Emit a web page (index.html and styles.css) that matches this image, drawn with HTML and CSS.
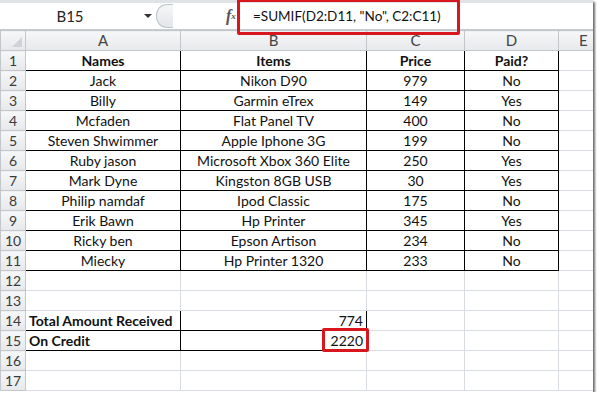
FILE: index.html
```html
<!DOCTYPE html>
<html lang="en">

<head>
    <meta charset="UTF-8">
    <title>SUMIF example</title>
    <link rel="stylesheet" href="styles.css">
</head>

<body>
    <div class="window">
        <div class="formula-bar">
            <div class="name-box">
                <span class="cell-ref">B15</span>
                <span class="arrow"></span>
            </div>
            <div class="grip"><span></span></div>
            <div class="fx">f<sub>x</sub></div>
            <div class="formula">
                <span class="formula-text">=SUMIF(D2:D11, "No", C2:C11)</span>
                <span class="highlight"></span>
            </div>
        </div>
        <table class="sheet">
            <colgroup>
                <col class="c-head">
                <col class="c-a">
                <col class="c-b">
                <col class="c-c">
                <col class="c-d">
                <col class="c-e">
            </colgroup>
            <tr class="col-heads">
                <th class="corner"><span></span></th>
                <th>A</th>
                <th>B</th>
                <th>C</th>
                <th>D</th>
                <th>E</th>
            </tr>
            <tr>
                <th>1</th>
                <td class="b bold">Names</td>
                <td class="b bold">Items</td>
                <td class="b bold">Price</td>
                <td class="b bold">Paid?</td>
                <td></td>
            </tr>
            <tr>
                <th>2</th>
                <td class="b">Jack</td>
                <td class="b">Nikon D90</td>
                <td class="b">979</td>
                <td class="b">No</td>
                <td></td>
            </tr>
            <tr>
                <th>3</th>
                <td class="b">Billy</td>
                <td class="b">Garmin eTrex</td>
                <td class="b">149</td>
                <td class="b">Yes</td>
                <td></td>
            </tr>
            <tr>
                <th>4</th>
                <td class="b">Mcfaden</td>
                <td class="b">Flat Panel TV</td>
                <td class="b">400</td>
                <td class="b">No</td>
                <td></td>
            </tr>
            <tr>
                <th>5</th>
                <td class="b">Steven Shwimmer</td>
                <td class="b">Apple Iphone 3G</td>
                <td class="b">199</td>
                <td class="b">No</td>
                <td></td>
            </tr>
            <tr>
                <th>6</th>
                <td class="b">Ruby jason</td>
                <td class="b">Microsoft Xbox 360 Elite</td>
                <td class="b">250</td>
                <td class="b">Yes</td>
                <td></td>
            </tr>
            <tr>
                <th>7</th>
                <td class="b">Mark Dyne</td>
                <td class="b">Kingston 8GB USB</td>
                <td class="b">30</td>
                <td class="b">Yes</td>
                <td></td>
            </tr>
            <tr>
                <th>8</th>
                <td class="b">Philip namdaf</td>
                <td class="b">Ipod Classic</td>
                <td class="b">175</td>
                <td class="b">No</td>
                <td></td>
            </tr>
            <tr>
                <th>9</th>
                <td class="b">Erik Bawn</td>
                <td class="b">Hp Printer</td>
                <td class="b">345</td>
                <td class="b">Yes</td>
                <td></td>
            </tr>
            <tr>
                <th>10</th>
                <td class="b">Ricky ben</td>
                <td class="b">Epson Artison</td>
                <td class="b">234</td>
                <td class="b">No</td>
                <td></td>
            </tr>
            <tr>
                <th>11</th>
                <td class="b">Miecky</td>
                <td class="b">Hp Printer 1320</td>
                <td class="b">233</td>
                <td class="b">No</td>
                <td></td>
            </tr>
            <tr>
                <th>12</th>
                <td></td><td></td><td></td><td></td><td></td>
            </tr>
            <tr>
                <th>13</th>
                <td></td><td></td><td></td><td></td><td></td>
            </tr>
            <tr>
                <th>14</th>
                <td class="b bold left">Total Amount Received</td>
                <td class="b num">774</td>
                <td></td><td></td><td></td>
            </tr>
            <tr>
                <th>15</th>
                <td class="b bold left">On Credit</td>
                <td class="b num active">2220<span class="mark"></span></td>
                <td></td><td></td><td></td>
            </tr>
            <tr>
                <th>16</th>
                <td></td><td></td><td></td><td></td><td></td>
            </tr>
            <tr>
                <th>17</th>
                <td></td><td></td><td></td><td></td><td></td>
            </tr>
        </table>
    </div>
</body>

</html>
```

FILE: styles.css
```css
body {
    margin: 0;
    background: #fff;
    font-family: Lato, 'Open Sans', sans-serif;
    color: #111;
}

.window {
    width: 593px;
    height: 392px;
    overflow: hidden;
    box-shadow: 2px 2px 2px #6f6f6f;
    background: #fff;
}

/* formula bar */

.formula-bar {
    position: relative;
    display: flex;
    height: 30px;
    box-sizing: border-box;
    border-top: 3px solid #dfe3e8;
    border-bottom: 1px solid #c6ccd4;
    background: #fff;
}

.name-box {
    width: 156px;
    display: flex;
    align-items: center;
    position: relative;
}

.cell-ref {
    width: 140px;
    text-align: center;
    font-size: 15px;
    color: #222;
}

.arrow {
    border-left: 4px solid transparent;
    border-right: 4px solid transparent;
    border-top: 4px solid #333;
    margin-left: 4px;
}

.grip {
    width: 70px;
    display: flex;
    align-items: center;
}

.grip span {
    width: 16px;
    height: 22px;
    border: 1px solid #bfc5cc;
    border-right: none;
    border-radius: 11px 0 0 11px;
    background: linear-gradient(#f5f6f7, #e3e6ea);
}

.fx {
    width: 12px;
    font-family: 'Liberation Serif', serif;
    font-style: italic;
    font-weight: bold;
    font-size: 16px;
    color: #555;
    display: flex;
    align-items: center;
}

.fx sub {
    font-size: 9px;
    vertical-align: -2px;
}

.formula {
    flex: 1;
    display: flex;
    align-items: center;
    padding-left: 14px;
    border-left: 1px solid #c6ccd4;
}

.formula-text {
    font-size: 13.5px;
    color: #111;
}

.highlight {
    position: absolute;
    left: 237px;
    top: -4px;
    width: 217px;
    height: 30px;
    border: 3px solid #d8161e;
    border-radius: 2px;
}

/* sheet grid */

.sheet {
    border-collapse: collapse;
    table-layout: fixed;
    width: 643px;
    font-size: 14px;
}

.c-head { width: 25px; }
.c-a { width: 155px; }
.c-b { width: 186px; }
.c-c { width: 98px; }
.c-d { width: 94px; }
.c-e { width: 85px; }

.sheet tr {
    height: 20px;
}

.sheet th,
.sheet td {
    border: 1px solid #d9dde3;
    padding: 0 3px;
    white-space: nowrap;
    overflow: hidden;
    height: 19px;
    line-height: 19px;
}

.sheet th {
    background: linear-gradient(#f6f7f8, #e6e8eb);
    border-color: #c3c7cc;
    font-weight: normal;
    color: #3a3a3a;
    font-size: 14px;
    text-align: center;
    padding: 0;
}

.col-heads th {
    font-size: 15px;
    color: #444;
}

.col-heads th:last-child {
    text-align: left;
    padding-left: 20px;
}

.corner {
    position: relative;
}

.corner span {
    position: absolute;
    right: 3px;
    bottom: 3px;
    width: 0;
    height: 0;
    border-left: 10px solid transparent;
    border-bottom: 10px solid #cfd2d6;
}

.sheet td {
    text-align: center;
}

.sheet td.b {
    border: 1px solid #000;
}

.bold {
    font-weight: bold;
}

.sheet td.left {
    text-align: left;
}

.sheet td.num {
    text-align: right;
}

.sheet td.active {
    position: relative;
    overflow: visible;
}

.mark {
    position: absolute;
    right: -3px;
    top: -3px;
    width: 41px;
    height: 18px;
    border: 3px solid #d8161e;
    border-radius: 2px;
}
```
